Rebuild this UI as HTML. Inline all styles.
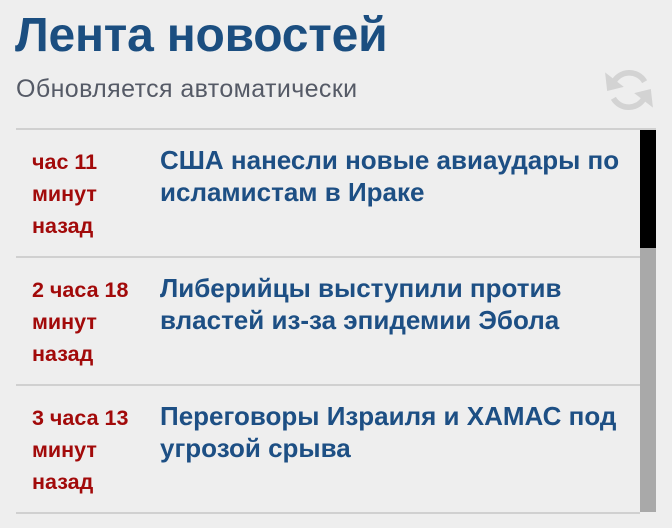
<!DOCTYPE html>
<html><head><meta charset="utf-8"><style>
body{margin:0;background:#eeeeee;width:672px;height:528px;overflow:hidden;font-family:"Liberation Sans",sans-serif;position:relative}
h1{position:absolute;left:15px;top:8px;margin:0;font-size:48px;font-weight:bold;color:#1b4e80;letter-spacing:-0.2px;line-height:56px}
.sub{position:absolute;left:16px;top:75px;font-size:25px;color:#555a66;letter-spacing:0.4px}
.line{position:absolute;left:16px;width:640px;height:2px;background:#d0d0d0}
.sb1{position:absolute;left:640px;top:130px;width:16px;height:118px;background:#000}
.sb2{position:absolute;left:640px;top:248px;width:16px;height:264px;background:#a9a9a9}
.t{position:absolute;left:32px;font-size:21.5px;font-weight:bold;color:#a20a0a;line-height:32px;width:120px}
.h{position:absolute;left:160px;font-size:26px;font-weight:bold;color:#1d4f84;line-height:32px;width:470px}
</style></head><body>
<h1>Лента новостей</h1>
<div class="sub">Обновляется автоматически</div>
<svg style="position:absolute;left:603px;top:64px" width="52" height="52" viewBox="0 0 50 50">
<path d="M40 17 A17 17 0 0 0 10 18" fill="none" stroke="#d3d3d3" stroke-width="5.5"/>
<path d="M2 8 L4 26 L20 22 Z" fill="#d3d3d3"/>
<path d="M10 33 A17 17 0 0 0 40 32" fill="none" stroke="#d3d3d3" stroke-width="5.5"/>
<path d="M48 42 L46 24 L30 28 Z" fill="#d3d3d3"/>
</svg>
<div class="line" style="top:128px"></div>
<div class="line" style="top:256px;width:624px"></div>
<div class="line" style="top:384px;width:624px"></div>
<div class="line" style="top:512px;width:624px"></div>
<div class="sb1"></div><div class="sb2"></div>
<div class="t" style="top:146px">час 11<br>минут<br>назад</div>
<div class="h" style="top:144px">США нанесли новые авиаудары по исламистам в Ираке</div>
<div class="t" style="top:274px">2 часа 18<br>минут<br>назад</div>
<div class="h" style="top:272px">Либерийцы выступили против властей из-за эпидемии Эбола</div>
<div class="t" style="top:402px">3 часа 13<br>минут<br>назад</div>
<div class="h" style="top:400px">Переговоры Израиля и ХАМАС под угрозой срыва</div>
</body></html>
